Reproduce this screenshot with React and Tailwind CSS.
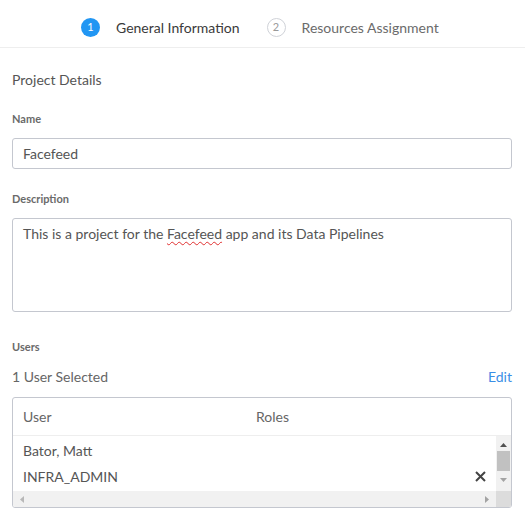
const Step = ({ n, label, active }) => (
  <div className="flex items-center">
    <div
      className={`w-[19px] h-[19px] rounded-full flex items-center justify-center text-[11px] ${
        active ? 'bg-[#2196f3] text-white' : 'border border-[#cfd2d8] text-[#999]'
      }`}
    >
      {n}
    </div>
    <span className={`ml-[16px] text-[14px] ${active ? 'text-[#3a3a3a]' : 'text-[#6b6b6b]'}`}>{label}</span>
  </div>
);

const Label = ({ children, className = '' }) => (
  <div className={`text-[11px] font-bold text-[#6a6a6a] leading-[16px] ${className}`}>{children}</div>
);

export default function App() {
  return (
    <div className="w-[525px] h-[523px] bg-white overflow-hidden" style={{ fontFamily: 'Lato, "Open Sans", sans-serif' }}>
      {/* Stepper */}
      <div className="h-[48px] border-b border-[#eeeeee] flex items-center pt-[7px] pl-[81px] gap-[27px]">
        <Step n="1" label="General Information" active />
        <Step n="2" label="Resources Assignment" />
      </div>

      <div className="pl-[12px] pr-[13px]">
        <div className="mt-[22px] text-[14px] leading-[20px] text-[#555]">Project Details</div>

        <Label className="mt-[21px]">Name</Label>
        <div className="mt-[11px] h-[31px] border border-[#c4c7cf] rounded-[3px] flex items-center px-[10px] text-[14px] text-[#555]">
          Facefeed
        </div>

        <Label className="mt-[22px]">Description</Label>
        <div className="mt-[11px] h-[94px] border border-[#c4c7cf] rounded-[3px] px-[10px] pt-[5px] text-[14px] leading-[20px] text-[#555]">
          This is a project for the{' '}
          <span className="underline decoration-wavy decoration-[#e03030] decoration-1 underline-offset-2">Facefeed</span>{' '}
          app and its Data Pipelines
        </div>

        <Label className="mt-[27px]">Users</Label>
        <div className="mt-[12px] flex justify-between text-[14px] leading-[20px]">
          <span className="text-[#666]">1 User Selected</span>
          <span className="text-[#3a8ee6]">Edit</span>
        </div>

        {/* Users table */}
        <div className="mt-[10px] h-[111px] border border-[#c4c7cf] rounded-[3px] flex flex-col overflow-hidden">
          <div className="h-[38px] shrink-0 border-b border-[#eeeeee] flex items-center text-[14px] text-[#666]">
            <span className="pl-[10px] w-[243px]">User</span>
            <span>Roles</span>
          </div>
          <div className="flex flex-1">
            <div className="flex-1 flex flex-col text-[14px] text-[#555] pl-[10px]">
              <div className="h-[27px] flex items-center mt-[1px]">Bator, Matt</div>
              <div className="h-[25px] flex items-center justify-between pr-[10px]">
                <span>INFRA_ADMIN</span>
                <svg width="11" height="11" viewBox="0 0 11 11">
                  <path d="M1 1L10 10M10 1L1 10" stroke="#444" strokeWidth="2" />
                </svg>
              </div>
            </div>
            <div className="w-[15px] bg-[#f1f1f1] flex flex-col items-center">
              <svg width="7" height="4" viewBox="0 0 7 4" className="mt-[7px]">
                <path d="M0 4L3.5 0L7 4Z" fill="#505050" />
              </svg>
              <div className="mt-[4px] w-[13px] h-[20px] bg-[#c1c1c1]" />
              <svg width="7" height="4" viewBox="0 0 7 4" className="mt-[7px]">
                <path d="M0 0L3.5 4L7 0Z" fill="#a3a3a3" />
              </svg>
            </div>
          </div>
          <div className="h-[16px] shrink-0 flex bg-[#f1f1f1]">
            <div className="flex-1 flex items-center justify-between px-[7px]">
              <svg width="4" height="7" viewBox="0 0 4 7">
                <path d="M4 0L0 3.5L4 7Z" fill="#b8b8b8" />
              </svg>
              <svg width="4" height="7" viewBox="0 0 4 7">
                <path d="M0 0L4 3.5L0 7Z" fill="#a3a3a3" />
              </svg>
            </div>
            <div className="w-[15px] bg-[#dcdcdc]" />
          </div>
        </div>
      </div>
    </div>
  );
}
